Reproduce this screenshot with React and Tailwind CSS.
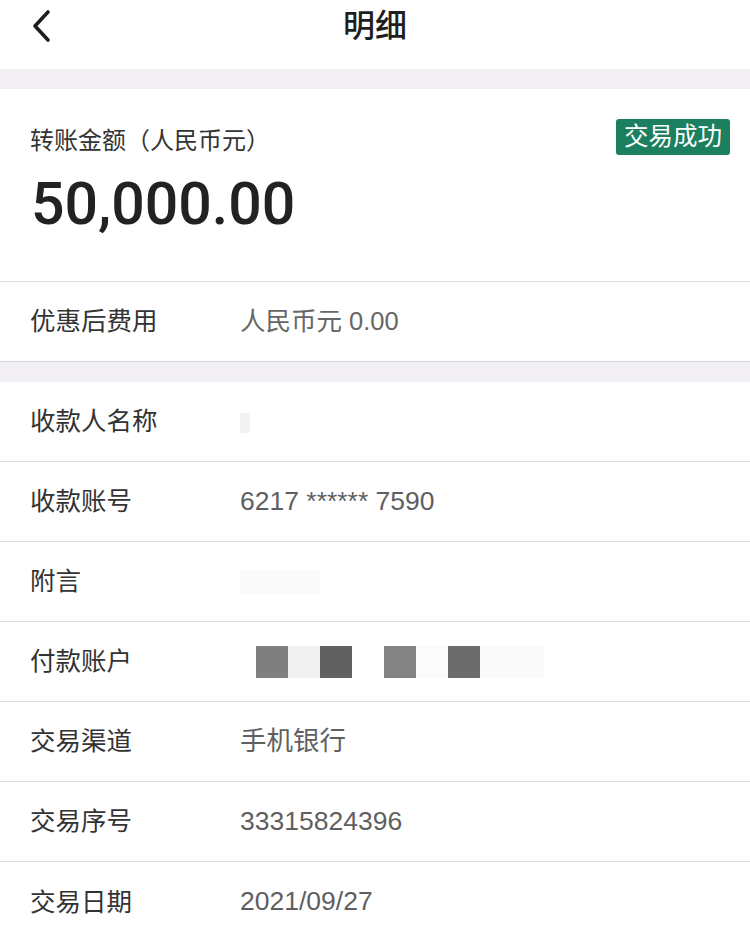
const font = { fontFamily: '"Liberation Sans", "Noto Sans CJK SC", sans-serif' };

function Row({ label, children, last }) {
  return (
    <div className={`flex items-center h-[80px] px-[30px] ${last ? '' : 'border-b border-[#dcdcdc]'}`}>
      <div className="w-[210px] text-[25.5px] text-[#333]">{label}</div>
      <div className="flex-1 text-[26.5px] text-[#5f5f5f]">{children}</div>
    </div>
  );
}

export default function App() {
  return (
    <div className="w-[750px] h-[933px] bg-white overflow-hidden" style={font}>
      <div className="relative h-[69px] flex items-center justify-center">
        <svg className="absolute left-[30px] top-[9px]" width="24" height="34" viewBox="0 0 24 34">
          <path d="M18 3 L5 17 L18 31" fill="none" stroke="#1e1e1e" strokeWidth="3.6" strokeLinecap="round" strokeLinejoin="round" />
        </svg>
        <h1 className="text-[32px] font-medium text-[#1e1e1e] -mt-[18px]">明细</h1>
      </div>
      <div className="h-[20px] bg-[#f1eff4]" />

      <div className="h-[193px] px-[30px] pt-[30px] border-b border-[#dcdcdc]">
        <div className="flex items-start justify-between">
          <div className="text-[24px] text-[#333] pt-[4px]">转账金额（人民币元）</div>
          <div className="bg-[#1b7f60] text-white text-[24.5px] leading-[36px] px-[8px] rounded-[3px] mr-[-10px]">交易成功</div>
        </div>
        <div
          className="text-[59px] font-medium text-[#222] leading-none mt-[15px] ml-[1px]"
          style={{ fontFamily: 'Roboto, "Liberation Sans", sans-serif' }}
        >
          50,000.00
        </div>
      </div>

      <div className="flex items-center h-[80px] px-[30px] border-b border-[#d6d6d6]">
        <div className="w-[210px] text-[25.5px] text-[#333]">优惠后费用</div>
        <div className="text-[25.5px] text-[#666]">人民币元 0.00</div>
      </div>
      <div className="h-[20px] bg-[#f1eff4]" />

      <Row label="收款人名称">
        <span className="inline-block w-[10px] h-[20px] bg-[#f2f2f2] align-middle" />
      </Row>
      <Row label="收款账号">6217 ****** 7590</Row>
      <Row label="附言">
        <span className="inline-block w-[80px] h-[24px] bg-[#fafafa] align-middle" />
      </Row>
      <Row label="付款账户">
        <div className="flex h-[32px] ml-[16px]">
          <div className="w-[32px] bg-[#7f7f7f]" />
          <div className="w-[32px] bg-[#f0f0f0]" />
          <div className="w-[32px] bg-[#616161]" />
          <div className="w-[32px] bg-white" />
          <div className="w-[32px] bg-[#838383]" />
          <div className="w-[32px] bg-[#fbfbfb]" />
          <div className="w-[32px] bg-[#6c6c6c]" />
          <div className="w-[64px] bg-[#fafafa]" />
        </div>
      </Row>
      <Row label="交易渠道">手机银行</Row>
      <Row label="交易序号">33315824396</Row>
      <Row label="交易日期" last>2021/09/27</Row>
    </div>
  );
}
